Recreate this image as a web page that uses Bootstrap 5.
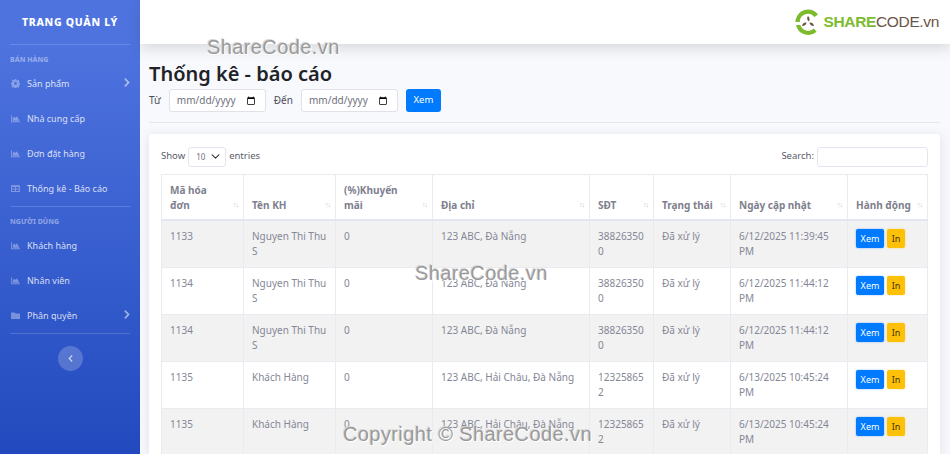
<!DOCTYPE html>
<html lang="en">
<head>
  <meta charset="UTF-8" />
  <meta name="viewport" content="width=device-width, initial-scale=1.0"/>
  <title>Thống kê - báo cáo</title>
  <link href="https://cdn.jsdelivr.net/npm/bootstrap@5.3.0/dist/css/bootstrap.min.css" rel="stylesheet"/>
  <style>
    html, body { height: 100%; overflow: hidden; }
    body { font-family: "Noto Sans", "Open Sans", sans-serif; font-size: 10px; color: #858796; background: #f8f9fc; }
    .page-wrap { height: 454px; position: relative; overflow: hidden; }
    .side-bar { width: 140px; flex: none; height: 454px; background: linear-gradient(180deg, #4e73df 10%, #224abe 100%); color: rgba(255,255,255,.8); padding: 0 10px; }
    .side-title { height: 44px; line-height: 44px; font-size: 10.5px; font-weight: 800; letter-spacing: .7px; color: #fff; text-align: center; white-space: nowrap; margin: 0 -10px; }
    .side-line { border-top: 1px solid rgba(255,255,255,.16); }
    .side-head { font-size: 7px; font-weight: 800; color: rgba(255,255,255,.42); height: 13px; line-height: 13px; }
    .side-link { height: 35px; font-size: 9px; color: rgba(255,255,255,.8); text-decoration: none; white-space: nowrap; }
    .side-link svg { width: 9px; height: 9px; fill: rgba(255,255,255,.35); flex: none; margin: 0 7px 0 1px; }
    .side-link .side-caret { width: 6px; height: 9px; margin: 0 0 0 auto; fill: rgba(255,255,255,.55); position: relative; top: -1px; }
    .side-toggle { width: 25px; height: 25px; border-radius: 50%; background: rgba(255,255,255,.2); border: 0; padding: 0; }
    .side-toggle svg { width: 5px; height: 7px; fill: rgba(255,255,255,.7); display: block; margin: 0 auto; }
    .main-area { min-width: 0; flex: 1; }
    .top-strip { height: 44px; background: #fff; box-shadow: 0 4px 14px rgba(58,59,69,.18); padding-right: 11px; position: relative; }
    .logo-word { font-size: 15.5px; line-height: 1; letter-spacing: -.35px; font-family: "Liberation Sans", sans-serif; margin-left: 1px; }
    .logo-green { color: #7dbb2e; font-weight: 700; }
    .logo-brown { color: #6a5446; }
    .page-body { padding: 16px 10px 0 9px; }
    .page-name { font-size: 20px; font-weight: 600; color: #1f2328; line-height: 27px; margin: 0 0 2px; }
    .filter-label { font-size: 10px; color: #4b4d59; }
    .date-box { width: 97px; height: 23px; font-size: 10px; padding: 0 7px; border: 1px solid #dfe2e8; color: #6e707e; border-radius: 3px; }
    .go-btn { height: 23px; width: 35px; background: #007bff; color: #fff; font-size: 9.5px; padding: 0; border: 0; border-radius: 3px; }
    .page-rule { border-top: 1px solid #e6e8ec; margin: 10px 0 11px; }
    .data-card { border: 0; border-radius: 3px; box-shadow: 0 2px 12px rgba(58,59,69,.12); padding: 12px 12px 0; margin-right: 0; }
    .len-select { width: 38px; height: 20px; font-size: 8px; padding: 0 0 0 7px; margin: 0 3px; border: 1px solid #e3e6f0; border-radius: 3px; background-position: right 5px center; background-size: 9px; color: #6e707e; }
    .search-box { width: 111px; height: 20px; border: 1px solid #e3e6f0; border-radius: 3px; padding: 0 4px; margin-left: 3px; }
    .tool-row { height: 21px; margin-bottom: 7px; color: #5a5c69; font-size: 9.5px; }
    .report-table { table-layout: fixed; width: 766px; font-size: 10px; color: #858796; margin: 0; border-color: #e9ebf0; }
    .report-table th { font-weight: 700; padding: 8px 14px 6px 8px; line-height: 15px; vertical-align: bottom; position: relative; border-bottom: 2px solid #e3e6f0; color: #7e808e; }
    .report-table td { padding: 8px; line-height: 15px; height: 45.6px; color: #858796; }
    .report-table th::after { content: "↑↓"; position: absolute; right: 5px; bottom: 9px; font-size: 7px; font-weight: 400; letter-spacing: -1px; line-height: 10px; color: #c4c5cd; }
    .report-table.table-striped > tbody > tr:nth-of-type(odd) > * { --bs-table-accent-bg: #f2f2f2; background: #f2f2f2; color: #858796; }
    .w-a { width: 82px; } .w-b { width: 92px; } .w-c { width: 97px; } .w-d { width: 157px; }
    .w-e { width: 64px; } .w-f { width: 77px; } .w-g { width: 117px; } .w-h { width: 80px; }
    .row-btn { font-size: 9px; height: 19px; padding: 0; border: 0; border-radius: 2px; line-height: 19px; }
    .row-view { width: 28px; background: #007bff; color: #fff; box-shadow: 0 0 2px rgba(0,123,255,.5); }
    .row-print { width: 18px; background: #ffc107; color: #3d3200; margin-left: 3px; box-shadow: 0 0 2px rgba(255,193,7,.5); }
    .mark-text { position: absolute; font-family: "Liberation Sans", sans-serif; font-weight: 400; font-size: 20px; white-space: nowrap; color: #9a9a9a; letter-spacing: .4px; text-shadow: 1px 1px 0 #fff, -1px -1px 0 #d8d8d8; pointer-events: none; }
    .mark-one { left: 207px; top: 32px; }
    .mark-two { left: 415px; top: 258px; }
    .mark-three { left: 343px; top: 419px; }
  </style>
</head>
<body>

<div class="page-wrap d-flex">
  <div class="side-bar">
    <div class="side-title">TRANG QUẢN LÝ</div>
    <div class="side-line"></div>
    <div class="side-head mt-2">BÁN HÀNG</div>
    <a class="side-link d-flex align-items-center" href="#">
      <svg viewBox="0 0 16 16"><path d="M6.6 0h2.8l.4 2.2 1.4.6 1.9-1.3 2 2-1.3 1.9.6 1.4 2.1.4v2.8l-2.1.4-.6 1.4 1.3 1.9-2 2-1.9-1.3-1.4.6-.4 2.1H6.6l-.4-2.1-1.4-.6-1.9 1.3-2-2 1.3-1.9-.6-1.4L0 9.4V6.6l2.2-.4.6-1.4-1.3-1.9 2-2 1.9 1.3 1.4-.6zM8 5.4a2.6 2.6 0 1 0 0 5.2 2.6 2.6 0 0 0 0-5.2z"/></svg>
      Sản phẩm
      <svg class="side-caret" viewBox="0 0 6 10"><path d="M1.2 0 6 5 1.2 10 0 8.7 3.5 5 0 1.3z"/></svg>
    </a>
    <a class="side-link d-flex align-items-center" href="#">
      <svg viewBox="0 0 16 16"><path d="M0 2h1.6v11H16v1.6H0zM3 12V8l2.5-3.5L8 7l2.5-3L15 12z"/></svg>
      Nhà cung cấp
    </a>
    <a class="side-link d-flex align-items-center" href="#">
      <svg viewBox="0 0 16 16"><path d="M0 2h1.6v11H16v1.6H0zM3 12V8l2.5-3.5L8 7l2.5-3L15 12z"/></svg>
      Đơn đặt hàng
    </a>
    <a class="side-link d-flex align-items-center" href="#">
      <svg viewBox="0 0 16 16"><path d="M0 2h16v12H0zm1.5 3.5v2.7h5.7V5.500zm7.300 0v2.7h5.7V5.500zm-7.300 4.200v2.800h5.700V9.700zm7.300 0v2.800h5.700V9.700z"/></svg>
      Thống kê - Báo cáo
    </a>
    <div class="side-line"></div>
    <div class="side-head mt-2">NGƯỜI DÙNG</div>
    <a class="side-link d-flex align-items-center" href="#">
      <svg viewBox="0 0 16 16"><path d="M0 2h1.6v11H16v1.6H0zM3 12V8l2.5-3.5L8 7l2.5-3L15 12z"/></svg>
      Khách hàng
    </a>
    <a class="side-link d-flex align-items-center" href="#">
      <svg viewBox="0 0 16 16"><path d="M0 2h1.6v11H16v1.6H0zM3 12V8l2.5-3.5L8 7l2.5-3L15 12z"/></svg>
      Nhân viên
    </a>
    <a class="side-link d-flex align-items-center" href="#">
      <svg viewBox="0 0 16 16"><path d="M0 2.500h6.500L8.300 4.500H16v9.500H0z"/></svg>
      Phân quyền
      <svg class="side-caret" viewBox="0 0 6 10"><path d="M1.2 0 6 5 1.2 10 0 8.7 3.500 5 0 1.300z"/></svg>
    </a>
    <div class="side-line"></div>
    <div class="text-center mt-2 pt-1">
      <button class="side-toggle" type="button"><svg viewBox="0 0 6 10"><path d="M4.800 0 0 5l4.800 5L6 8.700 2.500 5 6 1.300z"/></svg></button>
    </div>
  </div>

  <div class="main-area">
    <div class="top-strip d-flex align-items-center justify-content-end">
      <svg width="28" height="28" viewBox="0 0 28 28">
        <path d="M14 1.500a12.500 12.500 0 0 1 10 5l-3.500 2.500A8.300 8.300 0 0 0 5.700 14H1.500A12.500 12.500 0 0 1 14 1.500z" fill="#7dbb2e"/>
        <path d="M2 17h4.300a8.300 8.300 0 0 0 13.500 3.500l2.800 3.200A12.500 12.500 0 0 1 2 17z" fill="#7dbb2e"/>
        <path d="M14 8c2 2 2 4 .8 5.500C13 12 12.500 10 14 8zM8 18c.6-2.700 2.300-3.800 4.600-3.500C12 17 10.500 18.300 8 18zM20 18c-2.500.3-4-1-4.600-3.500C17.700 14.200 19.400 15.300 20 18z" fill="#6a5446"/>
      </svg>
      <span class="logo-word"><span class="logo-green">SHARE</span><span class="logo-brown">CODE.vn</span></span>
    </div>

    <div class="page-body">
      <h1 class="page-name">Thống kê - báo cáo</h1>
      <div class="d-flex align-items-center">
        <span class="filter-label me-2">Từ</span>
        <input class="form-control date-box" type="date"/>
        <span class="filter-label ms-2 me-2">Đến</span>
        <input class="form-control date-box" type="date"/>
        <button class="btn go-btn ms-2" type="button">Xem</button>
      </div>
      <div class="page-rule"></div>

      <div class="card data-card">
        <div class="tool-row d-flex justify-content-between align-items-center">
          <div class="d-flex align-items-center">Show
            <select class="form-select len-select"><option>10</option></select>
            entries</div>
          <div class="d-flex align-items-center">Search:<input class="search-box" type="text"/></div>
        </div>
        <table class="table table-bordered table-striped report-table">
          <colgroup>
            <col class="w-a"/><col class="w-b"/><col class="w-c"/><col class="w-d"/>
            <col class="w-e"/><col class="w-f"/><col class="w-g"/><col class="w-h"/>
          </colgroup>
          <thead>
            <tr>
              <th>Mã hóa đơn</th><th>Tên KH</th><th>(%)Khuyến mãi</th><th>Địa chỉ</th>
              <th>SĐT</th><th>Trạng thái</th><th>Ngày cập nhật</th><th>Hành động</th>
            </tr>
          </thead>
          <tbody>
            <tr>
              <td>1133</td><td>Nguyen Thi Thu S</td><td>0</td><td>123 ABC, Đà Nẵng</td><td>388263500</td><td>Đã xử lý</td><td>6/12/2025 11:39:45 PM</td>
              <td><button class="btn row-btn row-view" type="button">Xem</button><button class="btn row-btn row-print" type="button">In</button></td>
            </tr>
            <tr>
              <td>1134</td><td>Nguyen Thi Thu S</td><td>0</td><td>123 ABC, Đà Nẵng</td><td>388263500</td><td>Đã xử lý</td><td>6/12/2025 11:44:12 PM</td>
              <td><button class="btn row-btn row-view" type="button">Xem</button><button class="btn row-btn row-print" type="button">In</button></td>
            </tr>
            <tr>
              <td>1134</td><td>Nguyen Thi Thu S</td><td>0</td><td>123 ABC, Đà Nẵng</td><td>388263500</td><td>Đã xử lý</td><td>6/12/2025 11:44:12 PM</td>
              <td><button class="btn row-btn row-view" type="button">Xem</button><button class="btn row-btn row-print" type="button">In</button></td>
            </tr>
            <tr>
              <td>1135</td><td>Khách Hàng</td><td>0</td><td>123 ABC, Hải Châu, Đà Nẵng</td><td>123258652</td><td>Đã xử lý</td><td>6/13/2025 10:45:24 PM</td>
              <td><button class="btn row-btn row-view" type="button">Xem</button><button class="btn row-btn row-print" type="button">In</button></td>
            </tr>
            <tr>
              <td>1135</td><td>Khách Hàng</td><td>0</td><td>123 ABC, Hải Châu, Đà Nẵng</td><td>123258652</td><td>Đã xử lý</td><td>6/13/2025 10:45:24 PM</td>
              <td><button class="btn row-btn row-view" type="button">Xem</button><button class="btn row-btn row-print" type="button">In</button></td>
            </tr>
          </tbody>
        </table>
      </div>
    </div>
  </div>

  <div class="mark-text mark-one">ShareCode.vn</div>
  <div class="mark-text mark-two">ShareCode.vn</div>
  <div class="mark-text mark-three">Copyright © ShareCode.vn</div>
</div>

</body>
</html>
